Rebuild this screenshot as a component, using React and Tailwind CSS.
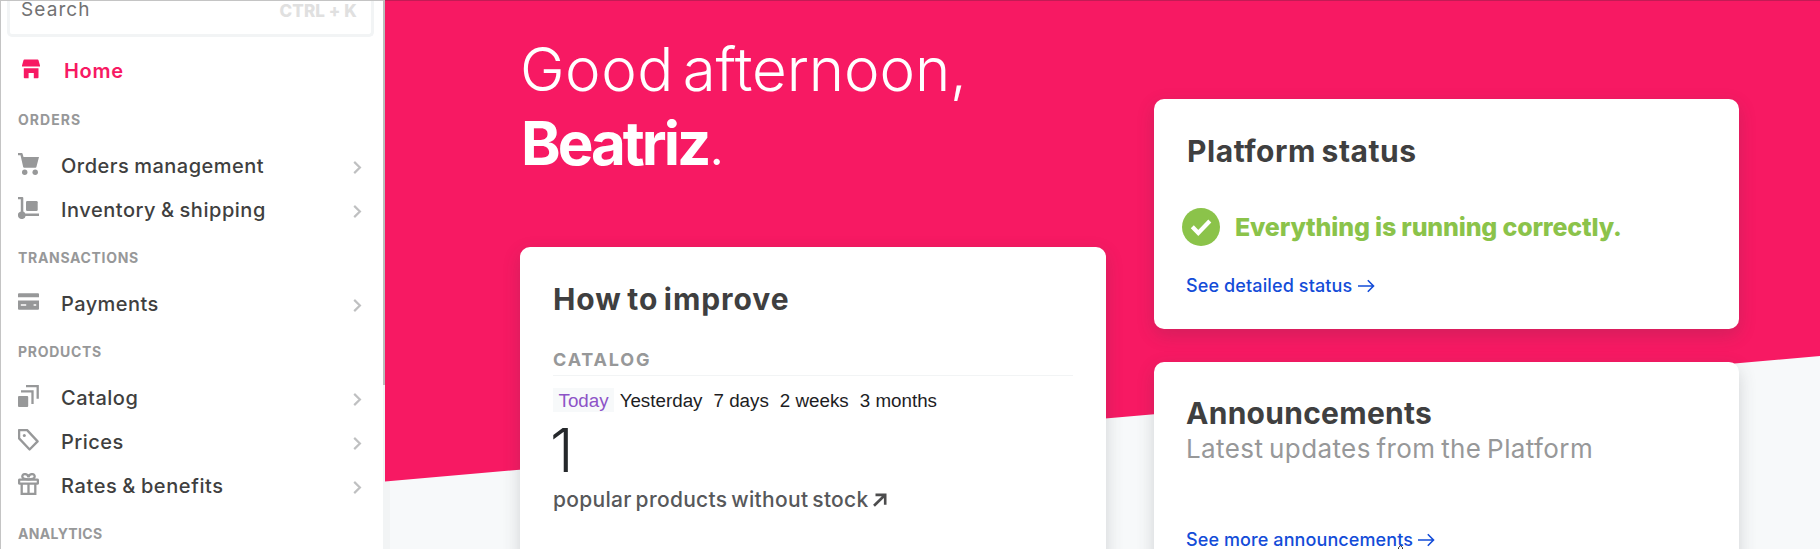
function CartIcon() {
  return (
    <svg width="21" height="22" viewBox="0 0 21 22" fill="#979899">
      <path d="M0 0h3.6a1 1 0 0 1 1 .7L5.5 4H21l-2.6 10a1 1 0 0 1-1 .8H6.2a1 1 0 0 1-1-.8L2.5 2.2H0z" />
      <circle cx="6.7" cy="19.2" r="2.7" />
      <circle cx="17.2" cy="19.2" r="2.7" />
    </svg>
  );
}

function DollyIcon() {
  return (
    <svg width="21" height="22" viewBox="0 0 21 22" fill="#979899">
      <path d="M0 0h4.3a1 1 0 0 1 1 1v13.6a3.8 3.8 0 0 1 2 1.8H21v2.5H7.6A3.9 3.9 0 1 1 2.8 14.4V2.2H0z" />
      <rect x="8" y="4" width="11.7" height="10" rx="1.2" />
    </svg>
  );
}

function CardIcon() {
  return (
    <svg width="21" height="22" viewBox="0 0 21 22" fill="#979899">
      <path d="M1 2.2h19a1 1 0 0 1 1 1v3H0v-3a1 1 0 0 1 1-1z" />
      <path
        fillRule="evenodd"
        d="M0 9.6h21v8.2a1 1 0 0 1-1 1H1a1 1 0 0 1-1-1zM2.8 13.3v1.5h5.4v-1.5zM15.6 13.3v1.5h2.6v-1.5z"
      />
    </svg>
  );
}

function LayersIcon() {
  return (
    <svg width="21" height="22" viewBox="0 0 21 22" fill="none" stroke="#979899" strokeWidth="2.3">
      <rect x="0" y="11" width="10.2" height="11" rx="1" fill="#979899" stroke="none" />
      <path d="M3 6.3h11.5v12.7" />
      <path d="M8 1.2h11.7v12.6" />
    </svg>
  );
}

function TagIcon() {
  return (
    <svg width="21" height="22" viewBox="0 0 21 22" fill="none" stroke="#979899" strokeWidth="2.3">
      <path d="M1.1 1.1h8L19.6 12.4l-8 8.1L1.1 9.4z" strokeLinejoin="round" />
      <circle cx="6.3" cy="6.6" r="1.5" fill="#979899" stroke="none" />
    </svg>
  );
}

function GiftIcon() {
  return (
    <svg width="21" height="22" viewBox="0 0 21 22" fill="none" stroke="#979899" strokeWidth="2.3">
      <rect x="1.1" y="6.6" width="18.8" height="4" rx="0.6" />
      <path d="M3.7 10.6V20.8h13.6V10.6M10.5 10.6V21" />
      <path d="M10.5 6.3C8.5 6.3 4.3 6.3 4.3 3.6 4.3 0.3 9.6 0 10.5 4.2M10.5 6.3c2 0 6.2 0 6.2-2.7 0-3.3-5.3-3.6-6.2.6" />
    </svg>
  );
}

function StoreIcon() {
  return (
    <svg width="18" height="20" viewBox="0 0 18 20" fill="#f71963">
      <path d="M2.4 0.5h13.2a.9.9 0 0 1 .9.7L18 6.4V7.4H0V6.4L1.5 1.2a.9.9 0 0 1 .9-.7z" />
      <path d="M1.8 9.3h14.7v9.2a.8.8 0 0 1-.8.8h-3.9v-5.3H6.6v5.3H2.6a.8.8 0 0 1-.8-.8z" />
    </svg>
  );
}

function Chevron() {
  return (
    <svg width="9" height="13" viewBox="0 0 9 13" fill="none" stroke="#bfc0c1" strokeWidth="2.2">
      <path d="M1.2 0.9l5.7 5.6-5.7 5.6" />
    </svg>
  );
}

function ArrowRight() {
  return (
    <svg width="17" height="14" viewBox="0 0 17 14" fill="none" stroke="#134cd8" strokeWidth="1.6">
      <path d="M0 7h15.5M9.8 1.3L15.5 7l-5.7 5.7" />
    </svg>
  );
}

function NavItem({ icon, label, className }) {
  return (
    <a className="flex h-11 shrink-0 items-center pr-[21px] pl-[17px]">
      <span className="-mt-1 w-[43px]">{icon}</span>
      <span className={`grow text-[20px] font-medium whitespace-nowrap text-[#3f3f40] ${className}`}>{label}</span>
      <span className="mt-[3px]">
        <Chevron />
      </span>
    </a>
  );
}

function NavHeading({ children, className }) {
  return (
    <div className={`flex h-[50px] shrink-0 items-center pl-[17px] text-[14px] font-bold text-[#979899] ${className}`}>
      {children}
    </div>
  );
}

function Sidebar() {
  return (
    <nav className="flex h-full w-[383px] shrink-0 flex-col border-t border-l border-[#c4c4c4] bg-white">
      <div className="mr-[9px] ml-1.5 flex h-9 shrink-0 items-start justify-between rounded-b-[5px] border-[3px] border-t-0 border-[#f2f4f5] pr-3.5 pl-[11px]">
        <span className="text-[19px] leading-[18px] tracking-[1.1px] text-[#727273]">Search</span>
        <span className="text-[17px] leading-5 font-extrabold tracking-[0.1px] text-[#e0e0e0]">CTRL + K</span>
      </div>
      <a className="mt-[13px] flex h-11 shrink-0 items-center pl-[21px]">
        <span className="-mt-1.5 w-[42px]">
          <StoreIcon />
        </span>
        <span className="-mt-0.5 text-[20px] font-semibold tracking-[0.7px] text-[#f71963]">Home</span>
      </a>
      <NavHeading className="tracking-[1.04px]">ORDERS</NavHeading>
      <NavItem icon={<CartIcon />} label="Orders management" className="tracking-[0.5px] [word-spacing:-1px]" />
      <NavItem icon={<DollyIcon />} label="Inventory & shipping" className="tracking-[0.54px] [word-spacing:-1px]" />
      <NavHeading className="tracking-[0.68px]">TRANSACTIONS</NavHeading>
      <NavItem icon={<CardIcon />} label="Payments" className="tracking-[0.43px]" />
      <NavHeading className="tracking-[0.7px]">PRODUCTS</NavHeading>
      <NavItem icon={<LayersIcon />} label="Catalog" className="tracking-[0.5px]" />
      <NavItem icon={<TagIcon />} label="Prices" className="tracking-[0.48px]" />
      <NavItem icon={<GiftIcon />} label="Rates & benefits" className="tracking-[0.6px] [word-spacing:-1px]" />
      <NavHeading className="tracking-[0.34px]">ANALYTICS</NavHeading>
    </nav>
  );
}

function Card({ children, className }) {
  return (
    <section className={`rounded-[10px] bg-white px-[33px] shadow-[0_6px_18px_rgba(61,62,64,0.2)] ${className}`}>
      {children}
    </section>
  );
}

function ImproveCard() {
  return (
    <Card className="mt-[67px] h-[340px] pt-[34px]">
      <h2 className="text-[30px] leading-[37px] font-bold tracking-[0.95px] text-[#3f3f40] [word-spacing:-2.5px]">
        How to improve
      </h2>
      <h3 className="mt-[30px] border-b border-[#f2f4f5] pb-[3px] text-[18px] leading-6 font-bold tracking-[1.82px] text-[#979899]">
        CATALOG
      </h3>
      <div className="mt-3 flex h-6 items-center font-['Liberation_Sans',Arial,sans-serif] text-[18.8px] leading-[23px] whitespace-nowrap text-[#1d1d1f]">
        <span className="bg-[#f7f9fa] px-[5.5px] pt-px text-[#8d53c7]">Today</span>
        <span className="px-[5.5px] pt-px">Yesterday</span>
        <span className="px-[5.5px] pt-px">7 days</span>
        <span className="px-[5.5px] pt-px">2 weeks</span>
        <span className="px-[5.5px] pt-px">3 months</span>
      </div>
      <div className="mt-2 -ml-[3px] text-[60px] leading-[60px] font-light text-[#25282b]">1</div>
      <div className="mt-1.5 flex items-center text-[21px] leading-7 font-medium tracking-[0.3px] whitespace-nowrap text-[#57585a] [word-spacing:-2px]">
        popular products without stock
        <svg className="ml-1" width="14" height="14" viewBox="0 0 14 14" fill="none" stroke="#4c4c4d" strokeWidth="2.6">
          <path d="M1 12.8L12 2M2.5 1.9h9.7v9.8" />
        </svg>
      </div>
    </Card>
  );
}

function StatusCard() {
  return (
    <Card className="h-[230px] pt-[34px]">
      <h2 className="text-[30px] leading-[37px] font-bold tracking-[0.55px] text-[#3f3f40] [word-spacing:-2px]">
        Platform status
      </h2>
      <div className="mt-[38px] -ml-[5px] flex h-[38px] items-center">
        <svg width="38" height="38" viewBox="0 0 38 38" fill="none">
          <circle cx="19" cy="19" r="19" fill="#8bc34a" />
          <path d="M10.3 18.8l6 6.2L27.8 13" stroke="#fff" strokeWidth="4.2" />
        </svg>
        <span className="ml-[15px] pt-px text-[25px] font-extrabold tracking-[-0.18px] whitespace-nowrap text-[#8bc34a]">
          Everything is running correctly.
        </span>
      </div>
      <a className="mt-7 -ml-px flex items-center gap-1.5 text-[18px] leading-6 font-medium tracking-[0.12px] text-[#134cd8]">
        See detailed status
        <ArrowRight />
      </a>
    </Card>
  );
}

function AnnouncementsCard() {
  return (
    <Card className="mt-[33px] h-[230px] pt-[33px]">
      <h2 className="-ml-px text-[30px] leading-[37px] font-bold tracking-[0.28px] text-[#3f3f40]">Announcements</h2>
      <p className="-ml-px text-[26px] leading-[34px] tracking-[0.4px] whitespace-nowrap text-[#979899] [word-spacing:-2px]">
        Latest updates from the Platform
      </p>
      <a className="mt-[62px] -ml-px flex items-center gap-[5px] text-[18px] leading-6 font-medium tracking-[0.1px] text-[#134cd8]">
        See more announcements
        <ArrowRight />
      </a>
    </Card>
  );
}

export default function App() {
  return (
    <div className="relative flex h-[549px] w-[1820px] overflow-hidden bg-[#f7f9fa] font-[Inter,sans-serif]">
      <Sidebar />
      <div className="flex w-[7px] shrink-0 flex-col bg-[#f2f4f5]">
        <div className="h-[385px] w-0.5 bg-[#bcbcbc]" />
      </div>
      <div className="absolute inset-y-0 right-0 left-[385px] bg-[#f71963] [clip-path:polygon(0_0,100%_0,100%_356px,0_481.5px)]" />
      <div className="absolute top-0 right-0 left-[385px] h-px bg-[#c31a55]" />
      <main className="relative flex gap-12 pl-[130px]">
        <div className="w-[586px] pt-8">
          <h1 className="text-[60px] leading-[74px] font-light whitespace-nowrap text-white">
            <span className="block tracking-[-0.1px] [word-spacing:-8px]">
              <span className="tracking-[0.5px]">Good</span> afternoon,
            </span>
            <b className="ml-px font-bold tracking-[-3px]">Beatriz</b>
            <span>.</span>
          </h1>
          <ImproveCard />
        </div>
        <div className="w-[585px] pt-[99px]">
          <StatusCard />
          <AnnouncementsCard />
        </div>
      </main>
      <svg className="absolute top-[545px] left-[1397px]" width="8" height="4" viewBox="0 0 8 4">
        <path d="M1.5 4V2.5L3.5 0.7L5.5 2.5V4" fill="#fff" stroke="#333" />
      </svg>
    </div>
  );
}
